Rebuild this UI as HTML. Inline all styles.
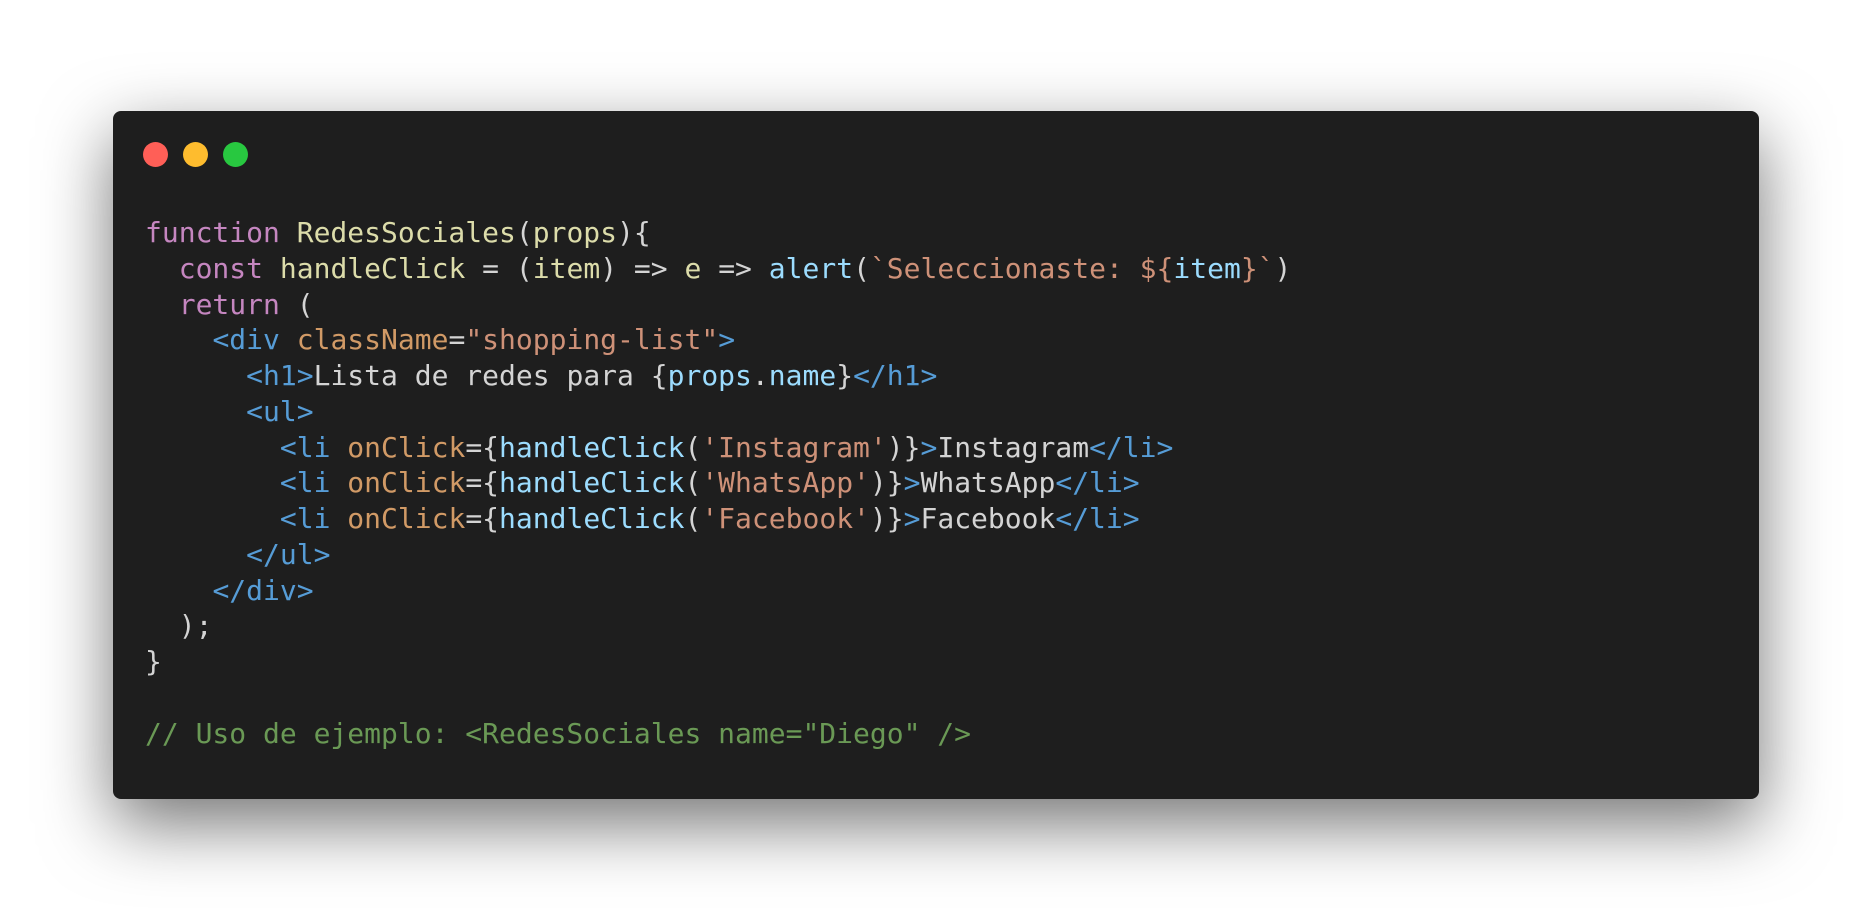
<!DOCTYPE html>
<html><head><meta charset="utf-8"><style>
html,body{margin:0;padding:0;width:1870px;height:910px;background:#fff;overflow:hidden}
.win{position:absolute;left:113px;top:111px;width:1646px;height:688px;background:#1e1e1e;border-radius:8px;box-shadow:0 25px 70px rgba(0,0,0,0.55)}
.dot{position:absolute;top:31px;width:25px;height:25px;border-radius:50%}
pre{position:absolute;left:32px;top:104px;margin:0;font-family:"DejaVu Sans Mono","Liberation Mono",monospace;font-size:28px;line-height:35.75px;color:#d4d4d4}
.k{color:#c586c0}.f{color:#dcdcaa}.v{color:#9cdcfe}.s{color:#ce9178}.t{color:#569cd6}.a{color:#d19a66}.c{color:#6a9955}
</style></head><body>
<div class="win">
<div class="dot" style="left:30px;background:#ff5f57"></div>
<div class="dot" style="left:70px;background:#febc2e"></div>
<div class="dot" style="left:110px;background:#28c840"></div>
<pre><span class="k">function</span> <span class="f">RedesSociales</span>(<span class="f">props</span>){
  <span class="k">const</span> <span class="f">handleClick</span> = (<span class="f">item</span>) =&gt; <span class="f">e</span> =&gt; <span class="v">alert</span>(<span class="s">`Seleccionaste: ${</span><span class="v">item</span><span class="s">}`</span>)
  <span class="k">return</span> (
    <span class="t">&lt;div</span> <span class="a">className</span>=<span class="s">"shopping-list"</span><span class="t">&gt;</span>
      <span class="t">&lt;h1&gt;</span>Lista de redes para {<span class="v">props</span>.<span class="v">name</span>}<span class="t">&lt;/h1&gt;</span>
      <span class="t">&lt;ul&gt;</span>
        <span class="t">&lt;li</span> <span class="a">onClick</span>={<span class="v">handleClick</span>(<span class="s">'Instagram'</span>)}<span class="t">&gt;</span>Instagram<span class="t">&lt;/li&gt;</span>
        <span class="t">&lt;li</span> <span class="a">onClick</span>={<span class="v">handleClick</span>(<span class="s">'WhatsApp'</span>)}<span class="t">&gt;</span>WhatsApp<span class="t">&lt;/li&gt;</span>
        <span class="t">&lt;li</span> <span class="a">onClick</span>={<span class="v">handleClick</span>(<span class="s">'Facebook'</span>)}<span class="t">&gt;</span>Facebook<span class="t">&lt;/li&gt;</span>
      <span class="t">&lt;/ul&gt;</span>
    <span class="t">&lt;/div&gt;</span>
  );
}

<span class="c">// Uso de ejemplo: &lt;RedesSociales name="Diego" /&gt;</span></pre>
</div>
</body></html>
